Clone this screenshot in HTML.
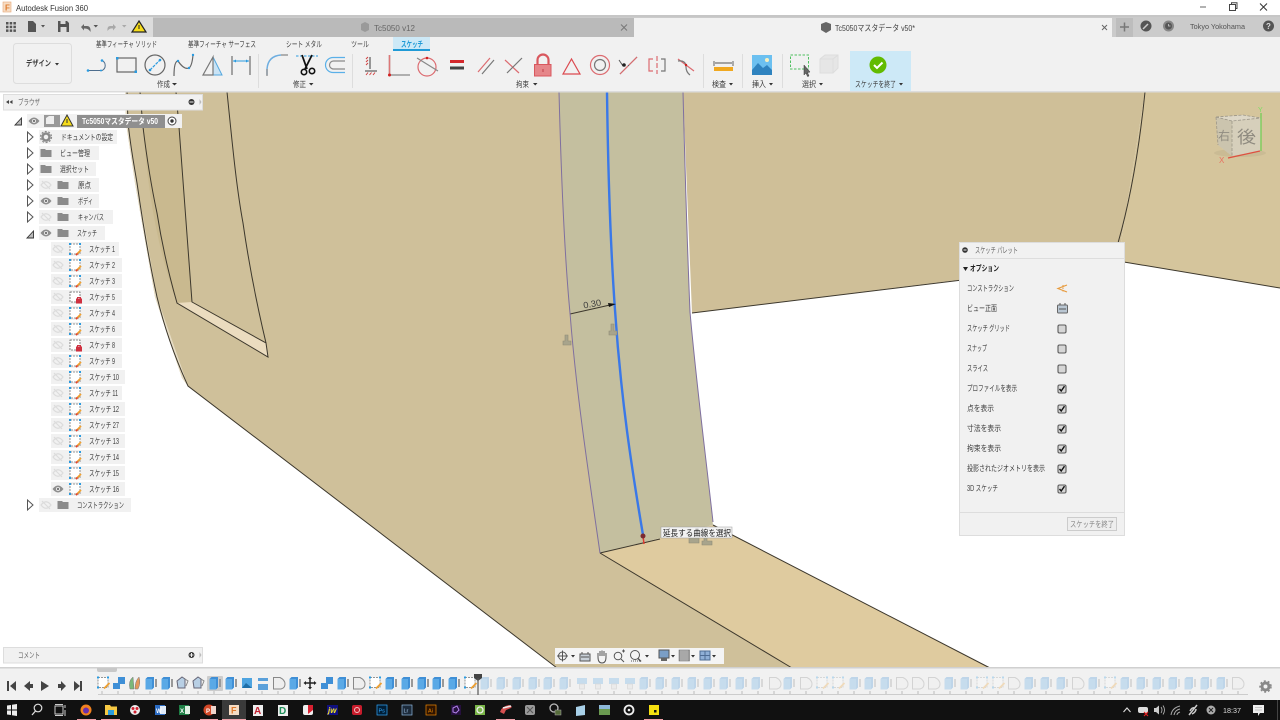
<!DOCTYPE html>
<html lang="ja"><head><meta charset="utf-8"><title>Autodesk Fusion 360</title>
<style>
html,body{margin:0;padding:0;width:1280px;height:720px;overflow:hidden;background:#fff}
svg{display:block;position:absolute;left:0;top:0;filter:blur(.35px)}
text{font-family:"Liberation Sans","Noto Sans CJK JP",sans-serif;font-size:8px;fill:#3c3c3c;dominant-baseline:auto}
.r{fill:#f1f1f1}
.b{font-weight:bold}
.g{fill:none;stroke:#666;stroke-width:1.2}
.rd{fill:none;stroke:#dc6b70;stroke-width:1.2}
.gy{fill:none;stroke:#777;stroke-width:1.2}
.bl{fill:#2a9be0}
.w{fill:#e8e8e8}
</style></head><body>
<svg width="1280" height="720" viewBox="0 0 1280 720">
<defs>
<g id="eo"><path d="M-5.500 0Q0 -7 5.500 0Q0 7 -5.500 0Z" fill="#8e8e8e"/><circle r="2" fill="#f1f1f1"/><circle r="1.200" fill="#777"/></g>
<g id="eh"><path d="M-5 0Q0 -6.500 5 0Q0 6.500 -5 0Z" fill="none" stroke="#dcdcdc" stroke-width="1.200"/><path d="M-4 -4L4 4" stroke="#dcdcdc" stroke-width="1.200"/></g>
<g id="fd"><path d="M-5.500 -4H-1L0 -3H5.500V4H-5.500Z" fill="#8b8b8b"/></g>
<g id="sk"><rect x="-5" y="-5" width="10" height="10" fill="#fff" stroke="#777" stroke-width=".8" stroke-dasharray="2 1"/><rect x="-6" y="-6" width="2" height="2" fill="#2a9be0"/><rect x="4" y="-6" width="2" height="2" fill="#2a9be0"/><rect x="-6" y="4" width="2" height="2" fill="#2a9be0"/><path d="M1 6L6 1" stroke="#f0a030" stroke-width="1.800"/><path d="M1 6L2.500 4.500" stroke="#e04030" stroke-width="1.800"/></g>
<g id="skl"><rect x="-5" y="-5" width="10" height="10" fill="#fff" stroke="#666" stroke-width=".8" stroke-dasharray="2 1"/><rect x="1" y="1.500" width="6" height="5" fill="#d03040"/><path d="M2.500 1.500V0.500H5.500V1.500" fill="none" stroke="#d03040"/></g>
<g id="cb"><rect x="-4" y="-4" width="8" height="8" rx="1.500" fill="#d6d6d6" stroke="#5a5a5a" stroke-width="1.100"/></g>
<g id="cc"><use href="#cb"/><path d="M-2.500 0L-.8 2L2.500 -2.800" fill="none" stroke="#111" stroke-width="1.400"/></g>
<g id="B"><path d="M-5.500 -4L-3.500 -6H3V4.500L1 6.500H-5.500Z" fill="#3f8fd6"/><path d="M-5.500 -4H1V6.500H-5.500Z" fill="#5aa9e6"/><rect x="4" y="-4" width="2" height="8" fill="#999"/></g>
<g id="J"><path d="M-6 0H-1V-6H6V1H1V6H-6Z" fill="#3f8fd6"/></g>
<g id="D"><path d="M-5.500 -5.500H1Q6 -3 6 1Q6 5 2 6H-5.500Z" fill="#eee" stroke="#888"/></g>
<g id="C"><path d="M-5 -2L0 -6L3 -4V5H-4Z" fill="#b8cfe4" stroke="#667"/><path d="M3 -4L6 -2L4 3" fill="none" stroke="#888"/></g>
<g id="S"><rect x="-5" y="-5.500" width="10" height="10" fill="#fff" stroke="#777" stroke-width=".8" stroke-dasharray="2 1"/><rect x="-6" y="-6.500" width="2" height="2" fill="#2a9be0"/><rect x="4" y="-6.500" width="2" height="2" fill="#2a9be0"/><rect x="-6" y="3.500" width="2" height="2" fill="#2a9be0"/><path d="M1 5.500L6.500 0" stroke="#f0a030" stroke-width="1.800"/></g>
<g id="P"><path d="M-5 -5H5V1H-5Z" fill="#5aa9e6"/><rect x="-2.500" y="1" width="5" height="5" fill="#ddd" stroke="#999" stroke-width=".7"/></g>
</defs>

<!-- viewport -->
<rect y="92" width="1280" height="576" fill="#fff"/>
<path d="M125 92L126 123L135 183L155 297L182 378L188 386L557 668H792L600 553L559 92Z" fill="#cfc09a"/>
<path d="M125 92L126 123L135 183L155 297L182 378L188 386L157 297L137 183L128 123L127 92Z" fill="#e6dcc4"/>
<path d="M683 92L692 313L950 281L1118 261L1145 92Z" fill="#cfbf98"/>
<path d="M1145 92L1118 261L1280 288V92Z" fill="#d5c59c"/>
<path d="M143 127Q150 230 177 303L192 302L179 127Z" fill="#c9b98f"/>
<path d="M140 92L143 127L179 127L176 92Z" fill="#cbbb92"/>
<path d="M177 303L192 302L266 343L268 357Z" fill="#ebdcbf"/>
<path d="M600 553L713 525L990 668H792Z" fill="#dfcb9f"/>
<path d="M559 92C561 170 564 250 570 313C576 390 588 470 600 553L713 525C705 450 696 380 690 312C687 240 685 170 683 92Z" fill="#c4bf9f"/>
<g fill="none" stroke="#3c372c" stroke-width="1">
<path d="M127 92L128 123C131 150 134 165 137 183C143 225 150 265 157 297C165 330 176 360 188 386L557 668"/>
<path d="M140 92L143 127C147 160 151 185 157 213C162 245 169 275 177 303L268 357L266 343L192 302L179 127L176 92"/>
<path d="M227 92C232 140 236 185 243 223C249 265 257 305 266 343"/>
<path d="M600 553L792 668"/>
<path d="M600 553L660 539"/>
<path d="M713 525L990 668"/>
<path d="M692 313L1118 261"/><path d="M1118 261L1280 288"/>
<path d="M1145 92Q1136 180 1118 243"/>
<path d="M570 314L610 305"/>
</g>
<path d="M559 92C561 170 564 250 570 313C576 390 588 470 600 553" fill="none" stroke="#7f6f9f" stroke-width="1"/>
<path d="M683 92C685 170 687 240 690 312C696 380 705 450 713 522" fill="none" stroke="#7f6f9f" stroke-width="1"/>
<path d="M607 92C608 170 610 240 615 310C621 400 632 470 643 535" fill="none" stroke="#3a78e8" stroke-width="2.400"/>
<path d="M643 536L644 544" stroke="#e03a30" stroke-width="1.500"/>
<circle cx="643" cy="536" r="2.500" fill="#7a2a30"/>
<path d="M608 303L616 304L609 307Z" fill="#111"/>
<text x="583" y="307" transform="rotate(-10 592 303)" style="font-size:9px" fill="#444" textLength="18" lengthAdjust="spacingAndGlyphs">0.30</text>
<g fill="#a8a48c" stroke="#8e8a76" stroke-width=".6"><path d="M563 345V341H565V335H568V341H571V345Z"/><path d="M609 335V331H611V324H614V331H617V335Z"/><path d="M702 545V541H704V537H707V541H712V545Z"/><path d="M689 543V538H699V543Z"/></g>
<rect x="661" y="527" width="71" height="11" fill="#f2f2f2" stroke="#999" stroke-width=".5"/>
<text x="663" y="536" style="font-size:8.500px;fill:#222" textLength="68" lengthAdjust="spacingAndGlyphs">延長する曲線を選択</text>

<!-- viewcube -->
<ellipse cx="1240" cy="153" rx="26" ry="4" fill="#b6a988" opacity=".35"/>
<path d="M1216 117L1243 115L1261 118L1260 151L1232 156L1218 145Z" fill="#d6cfbb"/>
<path d="M1216 117L1232 121L1232 156L1218 145Z" fill="#cbc4ae"/>
<path d="M1216 117L1243 115L1261 118L1232 121Z" fill="#ddd7c6"/>
<path d="M1216 117L1232 121L1261 118M1232 121V156M1216 117L1218 145M1216 117L1243 115L1261 118" fill="none" stroke="#9c9688" stroke-width=".8" stroke-dasharray="3 1.500"/>
<text x="1237" y="143" style="font-size:17px;fill:#8f8b80" textLength="19" lengthAdjust="spacingAndGlyphs">後</text>
<text x="1218" y="140" style="font-size:12px;fill:#8f8b80" textLength="12" lengthAdjust="spacingAndGlyphs">右</text>
<path d="M1261 113V151" stroke="#6ccf50" stroke-width="1.200"/><path d="M1228 158L1260 151" stroke="#de5040" stroke-width="1.200"/>
<text x="1258" y="112" style="font-size:7px;fill:#7adf60">Y</text><text x="1219" y="163" style="font-size:8px;fill:#e87060">X</text>

<!-- titlebar -->
<rect width="1280" height="16" fill="#fff"/>
<rect x="3" y="2" width="8" height="10" fill="#f6dcc4" stroke="#e7a878" stroke-width=".6"/>
<text x="5" y="10.500" style="font-size:8px;fill:#df7a2c;font-weight:bold">F</text>
<text x="16" y="11" style="font-size:8.500px;fill:#333" textLength="72" lengthAdjust="spacingAndGlyphs">Autodesk Fusion 360</text>
<path d="M1200 7H1206" stroke="#666" stroke-width="1"/>
<path d="M1229.500 4.500H1235.500V10.500H1229.500Z M1231.500 4.500V2.800H1237V8.500H1235.500" fill="none" stroke="#444" stroke-width="1"/>
<path d="M1260 3.500L1267 10.500M1267 3.500L1260 10.500" stroke="#333" stroke-width="1"/>

<!-- tab row -->
<rect y="15" width="1280" height="22" fill="#cbcbcb"/>
<rect y="15" width="153" height="22" fill="#dcdcdc"/><rect y="15" width="1280" height="2" fill="#c6c6c6"/>
<rect x="153" y="18" width="481" height="19" fill="#bababa"/>
<rect x="634" y="18" width="478" height="19" fill="#f1f1f1"/>
<rect x="1116" y="18" width="17" height="19" fill="#bdbdbd"/>
<path d="M1120 27H1129M1124.500 22.500V31.500" stroke="#777" stroke-width="1.500"/>
<g fill="#555"><rect x="6" y="22" width="2.500" height="2.500"/><rect x="9.700" y="22" width="2.500" height="2.500"/><rect x="13.400" y="22" width="2.500" height="2.500"/><rect x="6" y="25.700" width="2.500" height="2.500"/><rect x="9.700" y="25.700" width="2.500" height="2.500"/><rect x="13.400" y="25.700" width="2.500" height="2.500"/><rect x="6" y="29.400" width="2.500" height="2.500"/><rect x="9.700" y="29.400" width="2.500" height="2.500"/><rect x="13.400" y="29.400" width="2.500" height="2.500"/>
<path d="M28 21H33L36 24V32H28Z"/><path d="M41 25H45L43 27.500Z"/>
<path d="M58 21H67L69 23V32H58Z"/><path d="M93.500 25H98L95.800 27.500Z"/></g>
<rect x="60.500" y="27" width="6" height="5" fill="#ddd"/><rect x="60.500" y="21" width="5" height="3" fill="#ddd"/>
<path d="M81 27L84 24V26H87Q91 26 90.500 32Q88.500 28 84 28.500V30.500Z" fill="#666"/>
<path d="M116 27L113 24V26H110Q107 26 107.500 31Q109.500 28 113 28.500V30.500Z" fill="#a8a8a8"/><path d="M122 25H126.500L124.200 27.500Z" fill="#aaa"/>
<path d="M139 21L146 32H132Z" fill="#f6dc1c" stroke="#222" stroke-width="1.200"/><path d="M139 25V29" stroke="#222"/>
<path d="M361 24L365 22L369 24V30L365 32L361 30Z" fill="#9a9a9a"/>
<text x="374" y="31" style="font-size:8.500px;fill:#666" textLength="41" lengthAdjust="spacingAndGlyphs">Tc5050 v12</text>
<path d="M621 24.500L627 30.500M627 24.500L621 30.500" stroke="#777" stroke-width="1"/>
<path d="M821 24L826 22L831 24V30L826 33L821 30Z" fill="#666"/>
<text x="835" y="31" style="font-size:8.500px;fill:#444" textLength="80" lengthAdjust="spacingAndGlyphs">Tc5050マスタデータ v50*</text>
<path d="M1102 25L1107 30M1107 25L1102 30" stroke="#666" stroke-width="1"/>
<circle cx="1146" cy="26" r="5.500" fill="#555"/><path d="M1143 29L1148 24" stroke="#ccc" stroke-width="1.500"/>
<circle cx="1168.500" cy="26" r="5.500" fill="#888"/><circle cx="1168.500" cy="26" r="3.500" fill="#555"/><path d="M1168.500 24V26H1170.500" stroke="#ccc" fill="none" stroke-width=".8"/>
<text x="1190" y="29" style="font-size:7.500px;fill:#555" textLength="55" lengthAdjust="spacingAndGlyphs">Tokyo Yokohama</text>
<circle cx="1268.500" cy="26" r="5.500" fill="#555"/><text x="1266" y="29" style="font-size:8px;fill:#ddd;font-weight:bold">?</text>

<!-- ribbon -->
<rect y="37" width="1280" height="54" fill="#f1f1f1"/><rect y="91" width="1280" height="1.500" fill="#dcdcdc"/>
<rect x="13.500" y="43.500" width="58" height="40" rx="3" fill="#f1f1f1" stroke="#ddd"/>
<text x="26" y="66" class="b" textLength="25" lengthAdjust="spacingAndGlyphs">デザイン</text><path d="M55 63H59L57 65.500Z" fill="#333"/>
<text x="96" y="47" textLength="61" lengthAdjust="spacingAndGlyphs">基準フィーチャ ソリッド</text>
<text x="188" y="47" textLength="68" lengthAdjust="spacingAndGlyphs">基準フィーチャ サーフェス</text>
<text x="286" y="47" textLength="36" lengthAdjust="spacingAndGlyphs">シート メタル</text>
<text x="351" y="47" textLength="18" lengthAdjust="spacingAndGlyphs">ツール</text>
<rect x="393" y="37" width="37" height="13" fill="#cde9f7"/><rect x="393" y="49" width="37" height="2" fill="#1f9ad6"/>
<text x="401" y="47" class="b" style="fill:#1f9ad6" textLength="22" lengthAdjust="spacingAndGlyphs">スケッチ</text>

<!-- 作成 -->
<path d="M88 70.500H102A5.500 5.500 0 0 0 102 60.500" fill="none" stroke="#4d6d8d" stroke-width="1"/><circle cx="88" cy="70.500" r="1.300" class="bl"/><circle cx="102" cy="60.500" r="1.300" class="bl"/><circle cx="101" cy="70.500" r="1" class="bl"/>
<rect x="117" y="58" width="19" height="14" class="g"/><rect x="116" y="57" width="2.500" height="2.500" class="bl"/><rect x="134.500" y="70.500" width="2.500" height="2.500" class="bl"/>
<circle cx="155" cy="65" r="10" class="g"/><path d="M150 70L160 60" stroke="#2a9be0" stroke-width="1.200" stroke-dasharray="3 1"/><circle cx="150" cy="70" r="1.300" class="bl"/><circle cx="160" cy="60" r="1.300" class="bl"/>
<path d="M174 76Q174 61 178 61Q184 70 189 68Q192 66 193 55" class="g"/><circle cx="178" cy="61" r="1.200" class="bl"/><circle cx="189" cy="68" r="1.200" class="bl"/><circle cx="193" cy="55" r="1.200" class="bl"/>
<path d="M213 57L222 75H213Z" fill="#c9e3f5" stroke="#54a7de"/><path d="M213 57L203 75H213Z" fill="none" stroke="#777" stroke-width="1.200"/>
<path d="M232 56V75M250 56V75" stroke="#888" stroke-width="1.500"/><path d="M233 61H249" stroke="#2a9be0" stroke-width="1"/><path d="M233 61L236 59.500V62.500ZM249 61L246 59.500V62.500Z" fill="#2a9be0"/>
<text x="157" y="87" textLength="13" lengthAdjust="spacingAndGlyphs">作成</text><path d="M172 83H177L174.500 85.500Z" fill="#333"/>
<path d="M258.500 54V88M352.500 54V88M703.500 54V88M742.500 54V88M782.500 54V88" stroke="#ddd"/>
<!-- 修正 -->
<path d="M267 75V69Q268 56 281 55" fill="none" stroke="#6eaee0" stroke-width="1.500"/><path d="M281 55H288M267 69V76" stroke="#999" stroke-width="1.500"/>
<path d="M296 56H318" stroke="#2a9be0" stroke-dasharray="2.500 1.500" stroke-width="1"/>
<path d="M302 55L307 69M312 55L305 69" stroke="#111" stroke-width="1.800"/><circle cx="304" cy="72" r="2.700" fill="none" stroke="#111" stroke-width="1.600"/><circle cx="312" cy="71" r="2.700" fill="none" stroke="#111" stroke-width="1.600"/>
<path d="M345 57.500H333A7.500 7.500 0 0 0 333 72.500H345" fill="none" stroke="#5ab0e8" stroke-width="1.200"/><path d="M345 61H333.500A4 4 0 0 0 333.500 69H345" fill="none" stroke="#8a8a8a" stroke-width="1.200"/>
<text x="293" y="87" textLength="13" lengthAdjust="spacingAndGlyphs">修正</text><path d="M309 83H313.500L311.200 85.500Z" fill="#333"/>
<!-- 拘束 -->
<path d="M370 57V69" stroke="#777" stroke-width="1.500"/><path d="M366 59L368 57M366 62L368 60M366 65L368 63" stroke="#d04040"/><path d="M365 71H377" stroke="#777" stroke-width="1.500"/><path d="M366 75L368 72.500M369.500 75L371.500 72.500M373 75L375 72.500" stroke="#d04040"/>
<path d="M389.500 55V75H410" fill="none" stroke="#999" stroke-width="1.500"/><path d="M389.500 55V75" stroke="#d77" stroke-width="1.500"/><circle cx="389.500" cy="75" r="1.500" fill="#d02020"/>
<circle cx="427" cy="67" r="9" class="rd"/><path d="M417 58L438 71" stroke="#888" stroke-width="1.200"/><circle cx="427" cy="58" r="1.300" fill="#d02020"/>
<rect x="450" y="60" width="14" height="3" fill="#d4282c"/><rect x="450" y="66.500" width="14" height="3" fill="#444"/>
<path d="M478 72L490 58" class="rd"/><path d="M482 74L494 60" class="gy"/>
<path d="M505 60L519 73" class="rd"/><path d="M507 73L522 58" class="gy"/>
<path d="M537.500 65V60A5.500 5.500 0 0 1 548.500 60V65" fill="none" stroke="#d9585e" stroke-width="2.200"/><rect x="534.500" y="64.500" width="16.500" height="11.500" fill="#e6868a" stroke="#d9585e"/><path d="M543 69V72" stroke="#c04048"/>
<path d="M563 74L571.500 59L580 74Z" fill="none" stroke="#dc4a50" stroke-width="1.200"/>
<circle cx="600" cy="65" r="9.500" class="rd"/><circle cx="600" cy="65" r="5.500" class="gy"/>
<path d="M620 74L637 57" stroke="#555" stroke-width="1"/><path d="M620 74L628 66M629 65L637 57" class="rd"/><path d="M619 60L623 66" stroke="#555"/><circle cx="624" cy="65" r="1.800" fill="#222"/>
<path d="M653 59H649V71H653" class="rd"/><path d="M661 59H665V71H661" class="gy"/><path d="M657 56V74" stroke="#dc6b70" stroke-width="1.200" stroke-dasharray="5 2"/>
<path d="M678 59L694 71" class="rd"/><path d="M678 61Q686 60 686 67Q686 72 690 75" class="gy"/><circle cx="686" cy="65" r="1.200" fill="#d02020"/>
<text x="516" y="87" textLength="13" lengthAdjust="spacingAndGlyphs">拘束</text><path d="M533 83H537.500L535.200 85.500Z" fill="#333"/>
<!-- 検査 -->
<path d="M714 61V66M733 61V66M715 63H732" stroke="#555" stroke-width=".9"/><rect x="714" y="67" width="19" height="4" fill="#f0a820"/>
<text x="712" y="87" textLength="14" lengthAdjust="spacingAndGlyphs">検査</text><path d="M729 83H733L731 85.500Z" fill="#333"/>
<rect x="752" y="55" width="20" height="20" fill="#6cc0f0"/><path d="M752 75V70L758 63L763 68L767 65L772 70V75Z" fill="#2f83bf"/><circle cx="767" cy="60" r="2" fill="#f6f0c0"/>
<text x="752" y="87" textLength="14" lengthAdjust="spacingAndGlyphs">挿入</text><path d="M769 83H773L771 85.500Z" fill="#333"/>
<rect x="790.500" y="55" width="18" height="14" fill="none" stroke="#4fc060" stroke-width="1" stroke-dasharray="2.500 1.500"/>
<path d="M804 65V75L806 73L807.500 76.500L809 76L807.500 72.500L810 72Z" fill="#666" stroke="#333" stroke-width=".5"/>
<path d="M820 59L825 55H838V68L833 73H820Z" fill="#e6e6e6" stroke="#ddd"/><path d="M820 59H833V73M833 59L838 55" fill="none" stroke="#ddd"/>
<text x="802" y="87" textLength="14" lengthAdjust="spacingAndGlyphs">選択</text><path d="M819 83H823L821 85.500Z" fill="#333"/>
<rect x="850" y="51" width="61" height="40" fill="#cde9f7"/>
<circle cx="878" cy="65" r="8.500" fill="#62bb00"/><path d="M874 65L877 68L882.500 62.500" fill="none" stroke="#fff" stroke-width="2"/>
<text x="855" y="87" textLength="41" lengthAdjust="spacingAndGlyphs">スケッチを終了</text><path d="M899 83H903L901 85.500Z" fill="#333"/>

<!-- browser -->
<rect x="3.500" y="94.500" width="199" height="15.500" fill="#f1f1f1" stroke="#ddd"/>
<path d="M6 102L9 100V104ZM9.500 102L12.500 100V104Z" fill="#444"/>
<text x="18" y="105" style="fill:#666" textLength="22" lengthAdjust="spacingAndGlyphs">ブラウザ</text>
<circle cx="191.500" cy="102" r="3" fill="#333"/><path d="M189.500 102H193.500" stroke="#eee"/><path d="M199.500 99V105L201.500 102Z" fill="#bbb"/>
<rect x="27" y="114" width="155" height="14" class="r"/>
<path d="M15 125L21.500 118V125Z" fill="#bbb" stroke="#333" stroke-width=".9"/>
<use href="#eo" x="34" y="121"/>
<rect x="44" y="115" width="16" height="12" fill="#999"/><path d="M46 118L49 116H54V124H46Z" fill="#eee"/>
<path d="M67 115L73 126H61Z" fill="#f6dc1c" stroke="#333"/><path d="M67 119V123" stroke="#333"/>
<rect x="77" y="115" width="88" height="13" fill="#8f8f8f"/><text x="82" y="124" class="b" style="fill:#fff" textLength="76" lengthAdjust="spacingAndGlyphs">Tc5050マスタデータ v50</text>
<circle cx="172" cy="121" r="4" fill="#fff" stroke="#444"/><circle cx="172" cy="121" r="1.700" fill="#333"/>

<g class="r">
<rect x="39" y="130" width="78" height="14"/><rect x="39" y="146" width="60" height="14"/><rect x="39" y="162" width="57" height="14"/><rect x="39" y="178" width="60" height="14"/><rect x="39" y="194" width="60" height="14"/><rect x="39" y="210" width="74" height="14"/><rect x="39" y="226" width="66" height="14"/>
<rect x="51" y="242" width="68" height="14"/><rect x="51" y="258" width="71" height="14"/><rect x="51" y="274" width="71" height="14"/><rect x="51" y="290" width="71" height="14"/><rect x="51" y="306" width="71" height="14"/><rect x="51" y="322" width="71" height="14"/><rect x="51" y="338" width="71" height="14"/><rect x="51" y="354" width="71" height="14"/>
<rect x="51" y="370" width="74" height="14"/><rect x="51" y="386" width="71" height="14"/><rect x="51" y="402" width="74" height="14"/><rect x="51" y="418" width="74" height="14"/><rect x="51" y="434" width="74" height="14"/><rect x="51" y="450" width="74" height="14"/><rect x="51" y="466" width="74" height="14"/><rect x="51" y="482" width="74" height="14"/>
<rect x="39" y="498" width="92" height="14"/></g>
<g fill="#fff" stroke="#555" stroke-width="1"><path d="M27.500 132V142L33 137Z"/><path d="M27.500 148V158L33 153Z"/><path d="M27.500 164V174L33 169Z"/><path d="M27.500 180V190L33 185Z"/><path d="M27.500 196V206L33 201Z"/><path d="M27.500 212V222L33 217Z"/><path d="M27.500 500V510L33 505Z"/></g>
<path d="M27 238L33.500 231V238Z" fill="#bbb" stroke="#333" stroke-width=".9"/>
<circle cx="46" cy="137" r="3.500" fill="none" stroke="#8a8a8a" stroke-width="2.500"/><circle cx="46" cy="137" r="5.500" fill="none" stroke="#8a8a8a" stroke-width="1.200" stroke-dasharray="2 1.500"/>
<use href="#fd" x="46" y="153"/><use href="#fd" x="46" y="169"/>
<use href="#eh" x="46" y="185"/><use href="#fd" x="63" y="185"/>
<use href="#eo" x="46" y="201"/><use href="#fd" x="63" y="201"/>
<use href="#eh" x="46" y="217"/><use href="#fd" x="63" y="217"/>
<use href="#eo" x="46" y="233"/><use href="#fd" x="63" y="233"/>
<use href="#eh" x="46" y="505"/><use href="#fd" x="63" y="505"/>
<text x="61" y="140" textLength="52" lengthAdjust="spacingAndGlyphs">ドキュメントの設定</text>
<text x="60" y="156" textLength="30" lengthAdjust="spacingAndGlyphs">ビュー管理</text>
<text x="60" y="172" textLength="29" lengthAdjust="spacingAndGlyphs">選択セット</text>
<text x="78" y="188" textLength="13" lengthAdjust="spacingAndGlyphs">原点</text>
<text x="78" y="204" textLength="15" lengthAdjust="spacingAndGlyphs">ボディ</text>
<text x="78" y="220" textLength="26" lengthAdjust="spacingAndGlyphs">キャンバス</text>
<text x="77" y="236" textLength="20" lengthAdjust="spacingAndGlyphs">スケッチ</text>
<text x="77" y="508" textLength="47" lengthAdjust="spacingAndGlyphs">コンストラクション</text>
<use href="#eh" x="58" y="249"/><use href="#eh" x="58" y="265"/><use href="#eh" x="58" y="281"/><use href="#eh" x="58" y="297"/><use href="#eh" x="58" y="313"/><use href="#eh" x="58" y="329"/><use href="#eh" x="58" y="345"/><use href="#eh" x="58" y="361"/><use href="#eh" x="58" y="377"/><use href="#eh" x="58" y="393"/><use href="#eh" x="58" y="409"/><use href="#eh" x="58" y="425"/><use href="#eh" x="58" y="441"/><use href="#eh" x="58" y="457"/><use href="#eh" x="58" y="473"/><use href="#eo" x="58" y="489"/>
<use href="#sk" x="75" y="249"/><use href="#sk" x="75" y="265"/><use href="#sk" x="75" y="281"/><use href="#skl" x="75" y="297"/><use href="#sk" x="75" y="313"/><use href="#sk" x="75" y="329"/><use href="#skl" x="75" y="345"/><use href="#sk" x="75" y="361"/><use href="#sk" x="75" y="377"/><use href="#sk" x="75" y="393"/><use href="#sk" x="75" y="409"/><use href="#sk" x="75" y="425"/><use href="#sk" x="75" y="441"/><use href="#sk" x="75" y="457"/><use href="#sk" x="75" y="473"/><use href="#sk" x="75" y="489"/>
<text x="89" y="252" textLength="26" lengthAdjust="spacingAndGlyphs">スケッチ 1</text>
<text x="89" y="268" textLength="26" lengthAdjust="spacingAndGlyphs">スケッチ 2</text>
<text x="89" y="284" textLength="26" lengthAdjust="spacingAndGlyphs">スケッチ 3</text>
<text x="89" y="300" textLength="26" lengthAdjust="spacingAndGlyphs">スケッチ 5</text>
<text x="89" y="316" textLength="26" lengthAdjust="spacingAndGlyphs">スケッチ 4</text>
<text x="89" y="332" textLength="26" lengthAdjust="spacingAndGlyphs">スケッチ 6</text>
<text x="89" y="348" textLength="26" lengthAdjust="spacingAndGlyphs">スケッチ 8</text>
<text x="89" y="364" textLength="26" lengthAdjust="spacingAndGlyphs">スケッチ 9</text>
<text x="89" y="380" textLength="30" lengthAdjust="spacingAndGlyphs">スケッチ 10</text>
<text x="89" y="396" textLength="29" lengthAdjust="spacingAndGlyphs">スケッチ 11</text>
<text x="89" y="412" textLength="30" lengthAdjust="spacingAndGlyphs">スケッチ 12</text>
<text x="89" y="428" textLength="30" lengthAdjust="spacingAndGlyphs">スケッチ 27</text>
<text x="89" y="444" textLength="30" lengthAdjust="spacingAndGlyphs">スケッチ 13</text>
<text x="89" y="460" textLength="30" lengthAdjust="spacingAndGlyphs">スケッチ 14</text>
<text x="89" y="476" textLength="30" lengthAdjust="spacingAndGlyphs">スケッチ 15</text>
<text x="89" y="492" textLength="30" lengthAdjust="spacingAndGlyphs">スケッチ 16</text>

<!-- palette -->
<rect x="959.500" y="242.500" width="165" height="293" fill="#f1f1f1" stroke="#ddd"/>
<path d="M960 258.500H1124M960 512.500H1124" stroke="#ddd"/>
<circle cx="965" cy="250" r="2.800" fill="#333"/><path d="M963.500 250H966.500" stroke="#eee"/>
<text x="975" y="253" style="fill:#666" textLength="43" lengthAdjust="spacingAndGlyphs">スケッチ パレット</text>
<path d="M963 267H968L965.500 271Z" fill="#222"/>
<text x="970" y="271" class="b" style="fill:#222" textLength="29" lengthAdjust="spacingAndGlyphs">オプション</text>
<text x="967" y="291" textLength="47" lengthAdjust="spacingAndGlyphs">コンストラクション</text>
<text x="967" y="311" textLength="30" lengthAdjust="spacingAndGlyphs">ビュー正面</text>
<text x="967" y="331" textLength="43" lengthAdjust="spacingAndGlyphs">スケッチ グリッド</text>
<text x="967" y="351" textLength="20" lengthAdjust="spacingAndGlyphs">スナップ</text>
<text x="967" y="371" textLength="21" lengthAdjust="spacingAndGlyphs">スライス</text>
<text x="967" y="391" textLength="50" lengthAdjust="spacingAndGlyphs">プロファイルを表示</text>
<text x="967" y="411" textLength="27" lengthAdjust="spacingAndGlyphs">点を表示</text>
<text x="967" y="431" textLength="34" lengthAdjust="spacingAndGlyphs">寸法を表示</text>
<text x="967" y="451" textLength="34" lengthAdjust="spacingAndGlyphs">拘束を表示</text>
<text x="967" y="471" textLength="78" lengthAdjust="spacingAndGlyphs">投影されたジオメトリを表示</text>
<text x="967" y="491" textLength="31" lengthAdjust="spacingAndGlyphs">3D スケッチ</text>
<path d="M1067 285L1058 288.500L1067 292" fill="none" stroke="#e79a3c" stroke-width="1.200"/><path d="M1063 285V292" stroke="#e79a3c" stroke-dasharray="1.500 1"/>
<rect x="1057.500" y="305" width="10" height="8" rx="1" fill="#b9c6d2" stroke="#666"/><path d="M1060 305V303M1065 305V303M1059 309H1066" stroke="#555"/>
<use href="#cb" x="1062" y="329"/><use href="#cb" x="1062" y="349"/><use href="#cb" x="1062" y="369"/>
<use href="#cc" x="1062" y="389"/><use href="#cc" x="1062" y="409"/><use href="#cc" x="1062" y="429"/><use href="#cc" x="1062" y="449"/><use href="#cc" x="1062" y="469"/><use href="#cc" x="1062" y="489"/>
<rect x="1067.500" y="517.500" width="49" height="13" fill="#eee" stroke="#ccc"/>
<text x="1070" y="527" style="fill:#888" textLength="44" lengthAdjust="spacingAndGlyphs">スケッチを終了</text>

<!-- comment -->
<rect x="3.500" y="647.500" width="199" height="15.500" fill="#f1f1f1" stroke="#ddd"/>
<text x="18" y="658" style="fill:#666" textLength="22" lengthAdjust="spacingAndGlyphs">コメント</text>
<circle cx="191.500" cy="655" r="3" fill="#333"/><path d="M189.500 655H193.500M191.500 653V657" stroke="#eee"/><path d="M199.500 652V658L201.500 655Z" fill="#bbb"/>

<!-- view bar -->
<rect x="555" y="648" width="169" height="16" fill="#f4f4f4"/>
<g fill="none" stroke="#555" stroke-width="1">
<circle cx="562.500" cy="656" r="4"/><path d="M557 656H568M562.500 650.500V661.500"/>
<rect x="580" y="654" width="10" height="7" fill="#c8d0d8"/><path d="M582 654V652M588 654V652M581 657H589"/>
<path d="M598 657V653M600 656V651M602 656V650.500M604 656V651M606 657V653M598 657Q598 663 602 663Q606 663 606 657"/>
<circle cx="618" cy="656" r="3.800"/><path d="M621 659L624 662M622 651H625M623.500 649.500V652.500"/>
<circle cx="635" cy="655" r="4.500"/><path d="M638 658.500L641 661.500" stroke-width="1.500"/><path d="M631 661H641" stroke-dasharray="1 1"/>
</g>
<path d="M571 655H575L573 657.500ZM645 655H649L647 657.500ZM671 655H675L673 657.500ZM691 655H695L693 657.500ZM712 655H716L714 657.500Z" fill="#333"/>
<rect x="659" y="650" width="10" height="8" fill="#7a9ec6" stroke="#555"/><rect x="661" y="658" width="6" height="3" fill="#666"/>
<rect x="679" y="650" width="10.500" height="11" fill="#999" stroke="#666" stroke-width=".5"/><path d="M681 650V661M683 650V661M685 650V661M687 650V661" stroke="#ccc" stroke-width=".6"/>
<rect x="700" y="651" width="10" height="9" fill="#8fafd6" stroke="#4e6c94"/><path d="M705 651V660M700 655.500H710" stroke="#4e6c94"/>

<!-- timeline -->
<rect y="667" width="1280" height="33" fill="#f1f1f1"/><rect y="667" width="1280" height="1.500" fill="#d0d0d0"/>
<path d="M97 668H117V670Q117 672 115 672H99Q97 672 97 670Z" fill="#c8c8c8"/>
<g fill="#444"><rect x="7" y="681" width="2" height="10"/><path d="M16 681V691L10 686Z"/><path d="M24 686L30 681V691Z"/><rect x="30" y="684" width="3" height="4"/><path d="M41 681L49 686L41 691Z"/><path d="M58 684H61V688H58ZM61 681L66 686L61 691Z"/><path d="M74 681L80 686L74 691Z"/><rect x="80" y="681" width="2" height="10"/></g>
<path d="M98 694.500H1248" stroke="#ccc"/>
<path d="M102 691V694M118 691V694M134 691V694M150 691V694M166 691V694M182 691V694M198 691V694M214 691V694M230 691V694M246 691V694M262 691V694M278 691V694M294 691V694M310 691V694M326 691V694M342 691V694M358 691V694M374 691V694M390 691V694M406 691V694M422 691V694M438 691V694M454 691V694M470 691V694M486 691V694M502 691V694M518 691V694M534 691V694M550 691V694M566 691V694M582 691V694M598 691V694M614 691V694M630 691V694M646 691V694M662 691V694M678 691V694M694 691V694M710 691V694M726 691V694M742 691V694M758 691V694M774 691V694M790 691V694M806 691V694M822 691V694M838 691V694M854 691V694M870 691V694M886 691V694M902 691V694M918 691V694M934 691V694M950 691V694M966 691V694M982 691V694M998 691V694M1014 691V694M1030 691V694M1046 691V694M1062 691V694M1078 691V694M1094 691V694M1110 691V694M1126 691V694M1142 691V694M1158 691V694M1174 691V694M1190 691V694M1206 691V694M1222 691V694M1238 691V694" stroke="#bbb"/>
<rect x="207" y="676" width="16" height="15" rx="1" fill="#ccc"/>
<use href="#S" x="103" y="683"/><use href="#J" x="119" y="683"/>
<path d="M130 689Q128 681 133 677L134 689Z" fill="#7ab87a" stroke="#777" stroke-width=".5"/><path d="M135 689Q135 681 139 677Q141 683 138 689Z" fill="#e4985c" stroke="#777" stroke-width=".5"/>
<use href="#B" x="151" y="683"/><use href="#B" x="167" y="683"/><use href="#C" x="182" y="683"/><use href="#C" x="198" y="683"/><use href="#B" x="215" y="683"/><use href="#B" x="231" y="683"/>
<rect x="242" y="678" width="10" height="10" fill="#4ea4e0"/><path d="M242 688L246 683L252 688Z" fill="#1f6fa8"/>
<path d="M258 678H268V681H258ZM258 684H268V690H258Z" fill="#5aa0da"/>
<use href="#D" x="279" y="683"/><use href="#B" x="295" y="683"/>
<path d="M305 683H315M310 678V688" stroke="#222" stroke-width="1.500"/><path d="M310 676.500L308 679H312ZM310 689.500L308 687H312ZM303.500 683L306 681V685ZM316.500 683L314 681V685Z" fill="#222"/>
<use href="#J" x="327" y="683"/><use href="#B" x="343" y="683"/><use href="#D" x="359" y="683"/><use href="#S" x="375" y="683"/><use href="#B" x="391" y="683"/><use href="#B" x="407" y="683"/><use href="#B" x="423" y="683"/><use href="#B" x="438" y="683"/><use href="#B" x="454" y="683"/><use href="#S" x="470" y="683"/>
<g opacity=".28">
<use href="#B" x="486" y="683"/><use href="#B" x="502" y="683"/><use href="#B" x="518" y="683"/><use href="#B" x="534" y="683"/><use href="#B" x="549" y="683"/><use href="#B" x="565" y="683"/>
<use href="#P" x="582" y="683"/><use href="#P" x="598" y="683"/><use href="#P" x="614" y="683"/><use href="#P" x="630" y="683"/>
<use href="#B" x="645" y="683"/><use href="#B" x="661" y="683"/><use href="#B" x="677" y="683"/><use href="#B" x="693" y="683"/><use href="#B" x="709" y="683"/><use href="#B" x="725" y="683"/><use href="#B" x="741" y="683"/><use href="#B" x="757" y="683"/>
<use href="#D" x="775" y="683"/><use href="#B" x="789" y="683"/><use href="#D" x="806" y="683"/><use href="#S" x="822" y="683"/><use href="#S" x="838" y="683"/>
<use href="#B" x="855" y="683"/><use href="#B" x="870" y="683"/><use href="#B" x="886" y="683"/><use href="#D" x="902" y="683"/><use href="#D" x="918" y="683"/><use href="#D" x="934" y="683"/><use href="#B" x="950" y="683"/><use href="#B" x="966" y="683"/><use href="#S" x="982" y="683"/><use href="#S" x="998" y="683"/><use href="#D" x="1014" y="683"/><use href="#B" x="1030" y="683"/><use href="#B" x="1046" y="683"/><use href="#B" x="1062" y="683"/><use href="#D" x="1078" y="683"/><use href="#B" x="1094" y="683"/><use href="#S" x="1110" y="683"/><use href="#B" x="1126" y="683"/><use href="#B" x="1142" y="683"/><use href="#B" x="1158" y="683"/><use href="#B" x="1174" y="683"/><use href="#B" x="1190" y="683"/><use href="#B" x="1206" y="683"/><use href="#B" x="1222" y="683"/><use href="#D" x="1238" y="683"/>
</g>
<path d="M474 674H482V678L478 681L474 678Z" fill="#444"/><path d="M478 678V695" stroke="#555" stroke-width="1.200"/>
<circle cx="1265.500" cy="686.500" r="3.500" fill="none" stroke="#888" stroke-width="3"/><circle cx="1265.500" cy="686.500" r="5.500" fill="none" stroke="#888" stroke-width="1.500" stroke-dasharray="2 2"/>

<!-- taskbar -->
<rect y="700" width="1280" height="20" fill="#111"/>
<rect x="222" y="700" width="24" height="20" fill="#3a3a3a"/>
<g fill="#eee"><path d="M7 705.500L11 705V709.500H7ZM12 704.800L17 704V709.500H12ZM7 710.500H11V715L7 714.500ZM12 710.500H17V716L12 715.200Z"/></g>
<circle cx="38" cy="708" r="3.800" fill="none" stroke="#ddd" stroke-width="1.200"/><path d="M35.500 711L32 715" stroke="#ddd" stroke-width="1.300"/>
<path d="M55 706H63V714H55ZM65 705V708M65 710V716M55 704.500H63M55 715.500H63" fill="none" stroke="#ccc"/>
<circle cx="86" cy="710" r="5.500" fill="#f0811f"/><circle cx="86" cy="710.500" r="3" fill="#6a2fae"/>
<path d="M105 705H110L111 706.500H117V715H105Z" fill="#f6c944"/><rect x="108" y="710" width="6" height="5" fill="#2c9bdc"/>
<circle cx="135" cy="710" r="5" fill="#eee"/><circle cx="133" cy="708.500" r="1.500" fill="#d02030"/><circle cx="137" cy="708.500" r="1.500" fill="#d02030"/><circle cx="135" cy="712" r="1.500" fill="#d02030"/>
<rect x="155" y="705" width="10" height="10" fill="#2b6cc4"/><rect x="160" y="706" width="6" height="8" fill="#e0ecfa"/><text x="156" y="713" style="font-size:6px;fill:#fff;font-weight:bold">W</text>
<rect x="179" y="705" width="10" height="10" fill="#1e7e45"/><rect x="185" y="706" width="5" height="8" fill="#e0f0e4"/><text x="180" y="713" style="font-size:6px;fill:#fff;font-weight:bold">X</text>
<circle cx="209" cy="710" r="5.500" fill="#d24726"/><rect x="211" y="706" width="5" height="8" fill="#eed5cc"/><text x="206" y="713" style="font-size:6px;fill:#fff;font-weight:bold">P</text>
<rect x="229" y="705" width="10" height="10" fill="#f6dcc4"/><text x="231" y="713.500" style="font-size:9px;fill:#df7a2c;font-weight:bold">F</text>
<rect x="253" y="705" width="10" height="11" fill="#eee"/><text x="254" y="714" style="font-size:10px;fill:#c02030;font-weight:bold">A</text>
<rect x="278" y="705" width="10" height="11" fill="#eee"/><text x="279" y="714" style="font-size:10px;fill:#1f8f5a;font-weight:bold">D</text>
<rect x="303" y="705" width="10" height="10" rx="2" fill="#eee"/><path d="M308 710V705H313V710L308 714Z" fill="#d82030"/>
<rect x="327" y="705" width="11" height="10" fill="#101080"/><text x="328" y="713" style="font-size:8px;fill:#f6e620;font-weight:bold;font-style:italic">jw</text>
<rect x="352" y="705" width="10" height="10" rx="2" fill="#c81c2c"/><circle cx="357" cy="710" r="2.500" fill="none" stroke="#f0c0c0"/>
<rect x="377" y="705" width="10" height="10" fill="#001e36" stroke="#31a8ff" stroke-width=".7"/><text x="378.500" y="712.500" style="font-size:5.500px;fill:#31a8ff">Ps</text>
<rect x="402" y="705" width="10" height="10" fill="#1c2a3a" stroke="#8fb8e0" stroke-width=".7"/><text x="403.500" y="712.500" style="font-size:5.500px;fill:#aaccee">Lr</text>
<rect x="426" y="705" width="10" height="10" fill="#2e1400" stroke="#f08800" stroke-width=".7"/><text x="428" y="712.500" style="font-size:5.500px;fill:#f08800">Ai</text>
<rect x="451" y="705" width="10" height="10" fill="#26103e"/><path d="M453 708L457 706L459 710L456 713L453 712Z" fill="none" stroke="#b080e8"/>
<rect x="475" y="705" width="10" height="10" fill="#7ab648"/><circle cx="480" cy="710" r="3" fill="none" stroke="#eee" stroke-width="1.300"/>
<path d="M500 712Q502 706 509 705Q513 706 511 708L506 710L504 714Z" fill="#d85050"/><path d="M503 708L511 706" stroke="#eee" stroke-width="1.500"/>
<rect x="525" y="705" width="10" height="10" rx="2" fill="#999"/><path d="M527 707L533 713M533 707L527 713" stroke="#555"/>
<circle cx="554" cy="708" r="4" fill="none" stroke="#bbb" stroke-width="1.300"/><rect x="555" y="710" width="6" height="5" fill="#556b3a" stroke="#aaa" stroke-width=".5"/>
<path d="M576 707L585 705V715L576 716Z" fill="#a8d0e8"/>
<rect x="599" y="705" width="11" height="10" fill="#6a9a50"/><rect x="599" y="705" width="11" height="4" fill="#8cb8d8"/>
<circle cx="629" cy="710" r="4.500" fill="none" stroke="#eee" stroke-width="1.800"/><circle cx="629" cy="710" r="1.300" fill="#eee"/>
<rect x="649" y="705" width="10" height="10" fill="#f6e010"/><rect x="654" y="710" width="2.500" height="2.500" fill="#111"/>
<g fill="#eea0a8"><rect x="77" y="719" width="19" height="1"/><rect x="101" y="719" width="19" height="1"/><rect x="200" y="719" width="18" height="1"/><rect x="222" y="719" width="24" height="1"/><rect x="496" y="719" width="19" height="1"/><rect x="644" y="719" width="19" height="1"/></g>
<path d="M1123.500 712L1127 708L1130.500 712" fill="none" stroke="#ddd" stroke-width="1.100"/>
<rect x="1138" y="707" width="10" height="6" rx="2" fill="#ddd"/><path d="M1144 712L1148 716M1148 712L1144 716" stroke="#e02020" stroke-width="1.200"/>
<path d="M1154 708H1156L1159 705.500V714.500L1156 712H1154Z" fill="#ccc"/><path d="M1161 707Q1163 710 1161 713M1163 705.500Q1166 710 1163 714.500" fill="none" stroke="#bbb" stroke-width=".8"/>
<path d="M1171 715Q1172 708 1180 706M1174 715Q1175 710 1180 709M1177 715Q1177 713 1180 712" fill="none" stroke="#aaa" stroke-width="1"/>
<path d="M1189 715L1197 705M1190 711Q1192 707 1195 708M1192 714Q1196 712 1196 709" fill="none" stroke="#ccc" stroke-width="1.500"/>
<circle cx="1211" cy="710" r="4.500" fill="#aaa"/><path d="M1209 708L1213 712M1213 708L1209 712" stroke="#222" stroke-width="1"/>
<text x="1223" y="713" style="font-size:7.500px;fill:#ddd" textLength="18" lengthAdjust="spacingAndGlyphs">18:37</text>
<path d="M1253 705H1264V713H1260L1258 716V713H1253Z" fill="#eee"/><path d="M1255 707.500H1262M1255 710H1262" stroke="#999" stroke-width=".6"/>
<rect x="1277" y="700" width="1" height="20" fill="#444"/>
</svg>
</body></html>
